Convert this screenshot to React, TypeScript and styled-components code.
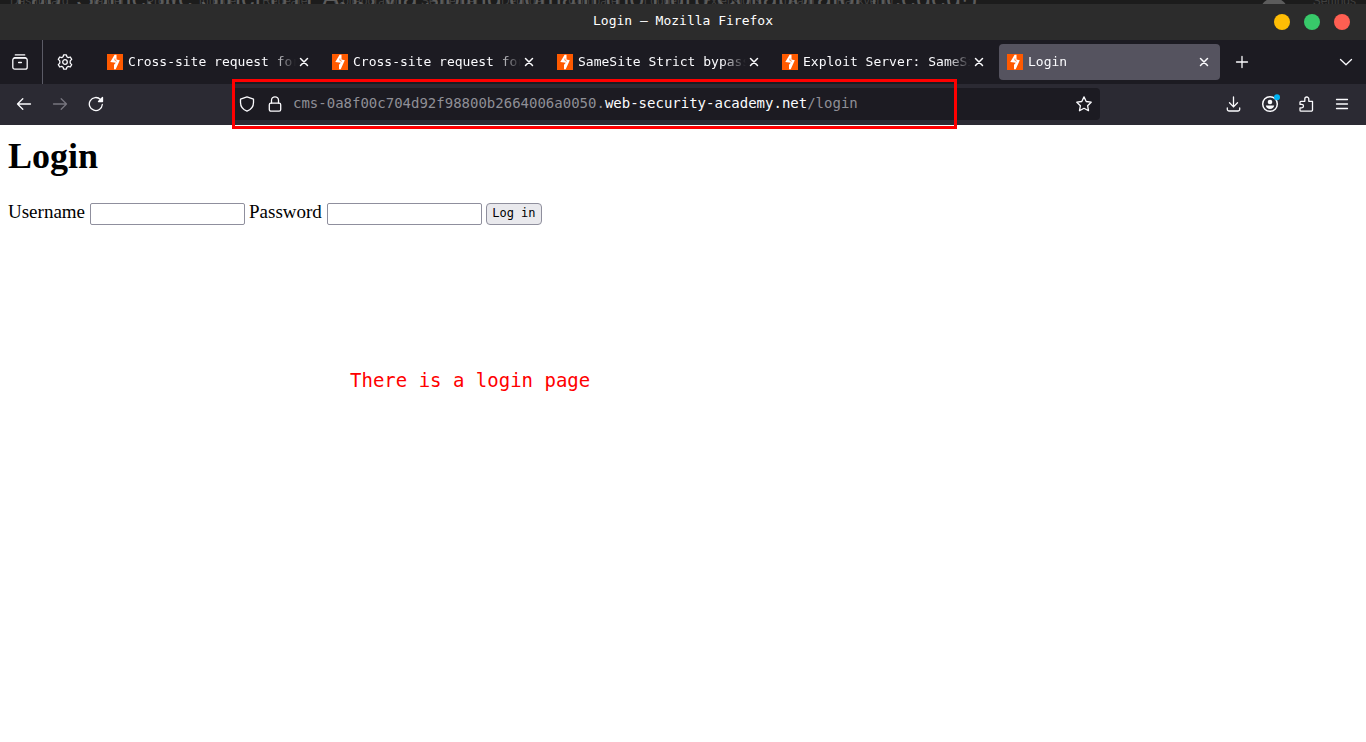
import React from 'react';
import styled, { createGlobalStyle } from 'styled-components';

const Global = createGlobalStyle`
  * { box-sizing: border-box; }
  body { margin: 0; background: #fff; font-family: 'DejaVu Sans Mono', 'Liberation Mono', monospace; }
  button, input { font: inherit; color: inherit; }
`;

const Desktop = styled.div`
  position: relative;
  min-height: 100vh;
  display: flex;
  flex-direction: column;
`;
const Backdrop = styled.div`
  position: relative;
  height: 4px;
  overflow: hidden;
  background: #1c1c1c;
  font-family: 'Liberation Sans', sans-serif;
  white-space: nowrap;
`;
const BackTitle = styled.div`
  position: absolute;
  left: 16px;
  bottom: -8px;
  font-size: 27px;
  line-height: 28px;
  color: #5c5c5c;
`;
const BackMenu = styled.div`
  position: absolute;
  left: 10px;
  right: 10px;
  bottom: -4px;
  display: flex;
  gap: 22px;
  font-size: 12px;
  line-height: 14px;
  color: #404040;
  & > :last-child { margin-left: auto; }
`;
const BackBadge = styled.div`
  position: absolute;
  right: 78px;
  top: -2px;
  width: 28px;
  height: 28px;
  border-radius: 50%;
  background: #5c5c5c;
`;
const TitleBar = styled.header`
  display: grid;
  grid-template-columns: 1fr auto 1fr;
  align-items: center;
  height: 36px;
  padding: 0 16px;
  background: #2c2c2c;
  color: #fff;
  font-size: 13px;
`;
const Title = styled.span`
  grid-column: 2;
  line-height: 32px;
  height: 34px;
`;
const WindowButtons = styled.div`
  display: flex;
  justify-content: flex-end;
  gap: 14px;
`;
const Dot = styled.button<{ $color: string }>`
  width: 16px;
  height: 16px;
  padding: 0;
  border: 0;
  border-radius: 50%;
  background: ${p => p.$color};
`;
const TabStrip = styled.nav`
  display: flex;
  align-items: center;
  height: 44px;
  background: #1c1b22;
  color: #fbfbfe;
`;
const IconButton = styled.button<{ $w?: number; $dim?: boolean }>`
  display: flex;
  flex: none;
  align-items: center;
  justify-content: center;
  width: ${p => p.$w ?? 36}px;
  height: 32px;
  padding: 0;
  border: 0;
  background: none;
  color: ${p => (p.$dim ? '#77757f' : '#fbfbfe')};
`;
const Pinned = styled.div`
  display: flex;
  align-items: center;
  align-self: stretch;
  padding: 0 3px 0 1px;
  border-right: 1px solid #5b5b66;
`;
const Tabs = styled.div`
  display: flex;
  flex: 0 1 1125px;
  min-width: 0;
  margin-left: 10px;
`;
const Tab = styled.div<{ $active?: boolean }>`
  display: flex;
  flex: 1 1 0;
  min-width: 0;
  align-items: center;
  height: 36px;
  margin: 0 2px;
  padding: 0 8px;
  border-radius: 4px;
  background: ${p => (p.$active ? '#55535f' : 'transparent')};
`;
const TabLabel = styled.button`
  flex: 1;
  min-width: 0;
  height: 24px;
  padding: 0;
  margin-left: 5px;
  border: 0;
  background: none;
  overflow: hidden;
  white-space: nowrap;
  text-align: left;
  font-size: 13px;
  line-height: 24px;
  mask-image: linear-gradient(to left, transparent, #000 24px);
`;
const Spacer = styled.div`
  flex: 1;
`;
const Toolbar = styled.div`
  display: flex;
  align-items: center;
  height: 41px;
  padding: 0 6px 1px;
  background: #2b2a33;
`;
const UrlBox = styled.div`
  display: flex;
  flex: 0 1 868px;
  min-width: 0;
  align-items: center;
  height: 32px;
  margin: 0 auto 0 118px;
  border-radius: 4px;
  background: #1c1b22;
`;
const Url = styled.a`
  flex: 1;
  min-width: 0;
  margin-left: 4px;
  padding-bottom: 2px;
  overflow: hidden;
  white-space: nowrap;
  color: #8f8f96;
  font-size: 14px;
  line-height: 20px;
  text-decoration: none;
  & b { color: #fbfbfe; font-weight: 400; }
`;
const Page = styled.main`
  flex: 1;
  padding: 8px;
  background: #fff;
  color: #000;
  font-family: 'Liberation Serif', serif;
`;
const Heading = styled.h1`
  margin: 0 0 20px;
  font-size: 36px;
  line-height: 46px;
`;
const Form = styled.form`
  display: flex;
  align-items: center;
  gap: 4px;
  font-size: 19px;
  line-height: 22px;
`;
const Field = styled.label`
  display: flex;
  align-items: center;
  gap: 5px;
`;
const TextBox = styled.input`
  width: 155px;
  height: 22px;
  margin-top: 4px;
  padding: 1px 2px;
  border: 1px solid #8f8f9d;
  border-radius: 2px;
  background: #fff;
  font-size: 13px;
`;
const Submit = styled.button`
  width: 56px;
  height: 22px;
  margin-top: 4px;
  padding: 0 0 2px;
  border: 1px solid #8f8f9d;
  border-radius: 4px;
  background: #e9e9ed;
  font-family: 'DejaVu Sans Mono', monospace;
  font-size: 12px;
  line-height: 18px;
`;
const Outline = styled.div`
  position: absolute;
  left: 232px;
  top: 79px;
  width: 725px;
  height: 50px;
  border: 3px solid #f00;
  pointer-events: none;
`;
const Note = styled.p`
  position: absolute;
  left: 350px;
  top: 368px;
  margin: 0;
  color: #f00;
  font-family: 'DejaVu Sans Mono', monospace;
  font-size: 19px;
  line-height: 24px;
`;
const FaviconSvg = styled.svg`
  flex: none;
`;

type IconProps = { children: React.ReactNode; size?: number };
const Icon = ({ children, size = 16 }: IconProps) => (
  <svg width={size} height={size} viewBox={`0 0 ${size} ${size}`} fill="none" stroke="currentColor"
    strokeWidth="1.3" strokeLinecap="round" strokeLinejoin="round" aria-hidden="true">{children}</svg>
);

const Favicon = () => (
  <FaviconSvg width="16" height="16" viewBox="0 0 16 16" aria-hidden="true">
    <rect width="16" height="16" fill="#ff5a00" />
    <path d="M7.600 .8H9.500V5.500L12.800 6.200 8.700 15.200H7V10.800L8.800 8.700 3.300 8z" fill="#fff" />
    <path d="M7.900 4.500V6.400L9.800 7.300" fill="none" stroke="#ff5a00" strokeWidth=".7" />
  </FaviconSvg>
);
const Cross = () => <Icon><path d="M4.500 4.500l7 7M11.500 4.500l-7 7" strokeWidth="1.500" /></Icon>;

const tabs = [
  'Cross-site request forgery',
  'Cross-site request forgery',
  'SameSite Strict bypass via sibling',
  'Exploit Server: SameSite Strict',
  'Login',
];
const menu = ['Dashboard', 'Target', 'Proxy', 'Intruder', 'Repeater', 'Collaborator', 'Sequencer', 'Decoder', 'Comparer', 'Logger', 'Extensions', 'Learn', 'Hackvertor', 'Settings'];

export default function App() {
  return (
    <Desktop>
      <Global />
      <Backdrop aria-hidden="true">
        <BackMenu>{menu.map(m => <span key={m}>{m}</span>)}</BackMenu>
        <BackTitle>Lab: SameSite Strict BYPASS via sibling domain (no Burp Collaborator needed!)</BackTitle>
        <BackBadge />
      </Backdrop>
      <TitleBar>
        <Title>Login – Mozilla Firefox</Title>
        <WindowButtons>
          <Dot $color="#ffbd05" aria-label="Minimize" />
          <Dot $color="#38c96a" aria-label="Maximize" />
          <Dot $color="#ff5f52" aria-label="Close window" />
        </WindowButtons>
      </TitleBar>
      <TabStrip>
        <Pinned>
          <IconButton $w={38} aria-label="Recent browsing">
            <Icon><path d="M3.300 .9h9.400M1.800 4.200C2 3.800 2.400 3.600 3 3.600h10c.6 0 1 .2 1.200.6" /><rect x=".8" y="4.200" width="14.400" height="11" rx="2" /><path d="M6.600 8.500h2.800" /></Icon>
          </IconButton>
        </Pinned>
        <IconButton $w={44} aria-label="Settings">
          <Icon>
            <path d="M6.600 .8h2.800l.5 2 1.400.8 2-.6 1.400 2.400-1.500 1.500v2.200l1.500 1.500-1.400 2.400-2-.6-1.400.8-.5 2H6.600l-.5-2-1.400-.8-2 .6-1.400-2.400 1.500-1.500V6.900L1.300 5.400 2.700 3l2 .6 1.400-.8z" />
            <circle cx="8" cy="8" r="2.300" />
          </Icon>
        </IconButton>
        <Tabs>
          {tabs.map((t, i) => (
            <Tab key={i} $active={i === 4}>
              <Favicon />
              <TabLabel>{t}</TabLabel>
              <IconButton $w={16} aria-label="Close tab"><Cross /></IconButton>
            </Tab>
          ))}
        </Tabs>
        <IconButton $w={40} aria-label="New tab"><Icon><path d="M8 2.500v11M2.500 8h11" /></Icon></IconButton>
        <Spacer />
        <IconButton $w={40} aria-label="List all tabs"><Icon><path d="M2.500 5.500L8 10.700l5.500-5.200" /></Icon></IconButton>
      </TabStrip>
      <Toolbar>
        <IconButton aria-label="Back"><Icon><path d="M14.500 8H1.500M6.800 2.700L1.500 8l5.300 5.300" /></Icon></IconButton>
        <IconButton $dim aria-label="Forward"><Icon><path d="M1.500 8h13M9.200 2.700L14.500 8l-5.300 5.300" /></Icon></IconButton>
        <IconButton aria-label="Reload"><Icon><path d="M14.300 8.500A6.500 6.500 0 1 1 12.500 3.500l1.300 1.300" /><path d="M14.500 1.500v4h-4z" fill="currentColor" /></Icon></IconButton>
        <UrlBox>
          <IconButton $w={29} aria-label="Tracking protection"><Icon><path d="M8 .9l6.500 2.300v3.300c0 3.800-2.800 7.200-6.500 8.600-3.700-1.400-6.500-4.800-6.500-8.600V3.200z" /></Icon></IconButton>
          <IconButton $w={28} aria-label="Connection secure"><Icon><rect x="2.300" y="7.200" width="11.400" height="8" rx="1.600" /><path d="M4.500 7V4.300a3.500 3.500 0 0 1 7 0V7" /></Icon></IconButton>
          <Url href="#login">cms-0a8f00c704d92f98800b2664006a0050.<b>web-security-academy.net</b>/login</Url>
          <IconButton $w={32} aria-label="Bookmark"><Icon><path d="M8 .9l2.200 4.600 5 .7-3.600 3.500.9 5L8 12.300l-4.500 2.400.9-5L.8 6.200l5-.7z" /></Icon></IconButton>
        </UrlBox>
        <IconButton aria-label="Downloads"><Icon><path d="M7.500 .9v10M3.500 6.800L7.500 10.900l4-4.100M1.300 12v1.200a1.800 1.800 0 0 0 1.800 1.800h8.800a1.800 1.800 0 0 0 1.800-1.800V12" /></Icon></IconButton>
        <IconButton aria-label="Account">
          <Icon size={20}><circle cx="10" cy="10" r="7.300" strokeWidth="1.500" /><circle cx="10" cy="8" r="2.300" fill="currentColor" stroke="none" /><path d="M5.800 11.500h8.400c-.4 2.300-2 3.400-4.200 3.400s-3.800-1.100-4.200-3.400z" fill="currentColor" stroke="none" /><circle cx="17" cy="3.200" r="3" fill="#00b3f4" stroke="none" /></Icon>
        </IconButton>
        <IconButton aria-label="Extensions"><Icon><path d="M3 15.200h10.200a1.300 1.300 0 0 0 1.300-1.300V5.300h-3.700V3a2 2 0 0 0-4 0v2.300H3a1 1 0 0 0-1 1v2.100h1.800a1.700 1.700 0 0 1 0 3.400H2v2.400a1 1 0 0 0 1 1z" /></Icon></IconButton>
        <IconButton aria-label="Menu"><Icon><path d="M2.500 3.500h11M2.500 8h11M2.500 12.500h11" /></Icon></IconButton>
      </Toolbar>
      <Page>
        <Heading>Login</Heading>
        <Form onSubmit={e => e.preventDefault()}>
          <Field>Username<TextBox name="username" /></Field>
          <Field>Password<TextBox name="password" type="password" /></Field>
          <Submit type="submit">Log in</Submit>
        </Form>
      </Page>
      <Outline />
      <Note>There is a login page</Note>
    </Desktop>
  );
}
